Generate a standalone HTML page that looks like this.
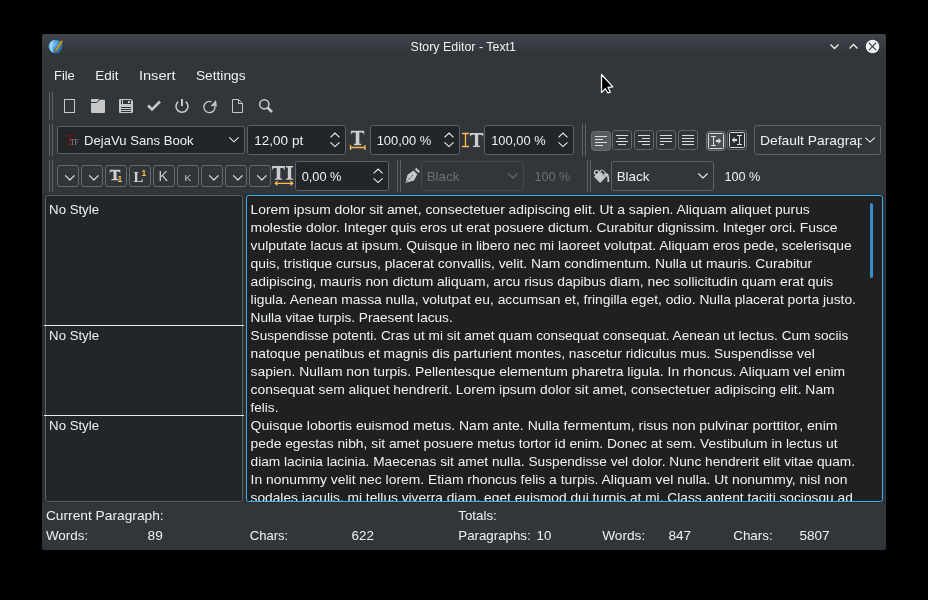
<!DOCTYPE html>
<html><head><meta charset="utf-8">
<style>
*{margin:0;padding:0}
html,body{width:928px;height:600px;background:#000;overflow:hidden}
svg{display:block;will-change:transform;font-family:"Liberation Sans",sans-serif}
</style></head><body>
<svg width="928" height="600" viewBox="0 0 928 600">
<defs><linearGradient id="tg" x1="0" y1="0" x2="0" y2="1"><stop offset="0" stop-color="#41464e"/><stop offset="1" stop-color="#31363b"/></linearGradient></defs>
<path d="M42,37 Q42,34 45,34 L883,34 Q886,34 886,37 L886,548 Q886,550 884,550 L44,550 Q42,550 42,548 Z" fill="#31363b" />
<path d="M42,37 Q42,34 45,34 L883,34 Q886,34 886,37 L886,52 L42,52 Z" fill="url(#tg)" />
<defs><radialGradient id="ball" cx="0.35" cy="0.3" r="0.8"><stop offset="0" stop-color="#79c2f0"/><stop offset="0.6" stop-color="#2f8bd0"/><stop offset="1" stop-color="#1a5f9e"/></radialGradient></defs>
<circle cx="55.4" cy="46.6" r="6.9" fill="url(#ball)"/>
<path d="M53.2,40.2 Q49.6,42.5 49.4,46.8 Q49.6,50.8 53.8,52.8 Q51.4,48 53.6,40.3 Z" fill="#b4dcf6" opacity="0.85"/>
<path d="M54.6,52.2 L55.3,49.6 L60.2,41.6 Q61.6,40 62.6,40.6 Q63,41.8 61.8,43.4 L57,50.4 Z" fill="#d4a03c" stroke="#6b4a12" stroke-width="0.5" />
<text x="410.60" y="51.10" textLength="105.40" lengthAdjust="spacingAndGlyphs" font-size="13" fill="#eff0f1" >Story Editor - Text1</text>
<path d="M830.5,44.5 L834.5,48.5 L838.5,44.5" fill="none" stroke="#eff0f1" stroke-width="1.3" />
<path d="M849.5,48.5 L853.5,44.5 L857.5,48.5" fill="none" stroke="#eff0f1" stroke-width="1.3" />
<circle cx="872.5" cy="46.5" r="6.8" fill="#eff0f1"/>
<path d="M868.9,42.9 L876.1,50.1 M876.1,42.9 L868.9,50.1" fill="none" stroke="#31363b" stroke-width="1.1" />
<text x="54.00" y="79.80" textLength="20.80" lengthAdjust="spacingAndGlyphs" font-size="13" fill="#eff0f1" >File</text>
<text x="95.20" y="79.80" textLength="23.20" lengthAdjust="spacingAndGlyphs" font-size="13" fill="#eff0f1" >Edit</text>
<text x="138.90" y="79.80" textLength="36.60" lengthAdjust="spacingAndGlyphs" font-size="13" fill="#eff0f1" >Insert</text>
<text x="195.90" y="79.80" textLength="49.70" lengthAdjust="spacingAndGlyphs" font-size="13" fill="#eff0f1" >Settings</text>
<rect x="49" y="92" width="1" height="28" fill="#5f6367"/><rect x="52" y="92" width="1" height="28" fill="#5f6367"/>
<rect x="64.5" y="99.5" width="10" height="13" rx="0" fill="none" stroke="#c6c7c8" stroke-width="1"/>
<path d="M91,100 Q91,99 92,99 L98,99 L98.8,99.8 L104,99.8 Q105,99.8 105,100.8 L105,112 Q105,113 104,113 L92,113 Q91,113 91,112 Z" fill="#c6c7c8" />
<path d="M91,102.5 L96.8,102.5 L99.3,100" fill="none" stroke="#31363b" stroke-width="1" />
<path d="M119,100 Q119,99 120,99 L131,99 L133,101 L133,112 Q133,113 132,113 L120,113 Q119,113 119,112 Z" fill="#c6c7c8" />
<rect x="121" y="100" width="1" height="4" rx="0" fill="#31363b"/>
<rect x="123" y="100" width="8" height="4" rx="0" fill="#31363b"/>
<rect x="128" y="101" width="2" height="2" rx="0" fill="#c6c7c8"/>
<rect x="121" y="107" width="10" height="1" rx="0" fill="#31363b"/>
<rect x="121" y="109" width="10" height="1" rx="0" fill="#31363b"/>
<rect x="121" y="111" width="10" height="1" rx="0" fill="#31363b"/>
<path d="M148,105.5 L152,109.5 L160,101.5" fill="none" stroke="#c6c7c8" stroke-width="2.6" />
<path d="M178.2,101.6 A6,6 0 1 0 185.8,101.6" fill="none" stroke="#c6c7c8" stroke-width="1.6" />
<rect x="181" y="99" width="2" height="7" rx="0" fill="#c6c7c8"/>
<path d="M215,106.5 A5.6,5.6 0 1 1 211.5,101.8" fill="none" stroke="#c6c7c8" stroke-width="1.4" />
<path d="M210.5,106 L217,106.5 L216,100 Z" fill="#bcc2c7" />
<path d="M232.5,99.5 L238.5,99.5 L242.5,103.5 L242.5,112.5 L232.5,112.5 Z" fill="none" stroke="#c6c7c8" stroke-width="1" />
<path d="M238.5,99.5 L238.5,103.5 L242.5,103.5" fill="none" stroke="#c6c7c8" stroke-width="1" />
<circle cx="264.3" cy="104.3" r="4.6" fill="none" stroke="#c6c7c8" stroke-width="1.6"/>
<path d="M267.5,107.5 L272,112" fill="none" stroke="#c6c7c8" stroke-width="2.6" />
<rect x="49" y="124" width="1" height="32" fill="#5f6367"/><rect x="52" y="124" width="1" height="32" fill="#5f6367"/>
<rect x="57.5" y="126.5" width="187" height="27" rx="2.2" fill="#232629" stroke="#5f6367" stroke-width="1"/>
<text x="65.5" y="144.7" font-family="Liberation Serif" font-size="15" fill="#8e0a0a">T</text>
<text x="70" y="144.7" font-family="Liberation Serif" font-size="7.5" fill="#8a8c8e">TF</text>
<text x="84.10" y="144.70" textLength="109.40" lengthAdjust="spacingAndGlyphs" font-size="13" fill="#eff0f1" >DejaVu Sans Book</text>
<path d="M229.3,137.3 L233.95000000000002,141.8 L238.60000000000002,137.3" fill="none" stroke="#eff0f1" stroke-width="1.05" />
<rect x="247.5" y="125.5" width="98" height="29" rx="2.2" fill="#232629" stroke="#5f6367" stroke-width="1"/>
<text x="254.30" y="145.20" textLength="48.90" lengthAdjust="spacingAndGlyphs" font-size="13" fill="#eff0f1" >12,00 pt</text>
<path d="M330.5,137.4 L335.0,133.1 L339.5,137.4" fill="none" stroke="#eff0f1" stroke-width="1.1" />
<path d="M330.5,142.3 L335.0,146.6 L339.5,142.3" fill="none" stroke="#eff0f1" stroke-width="1.1" />
<path d="M350.9,130.7 H364.2 V134.89999999999998 Q363.7,132.9 362.0,132.6 H359.34999999999997 V143.79999999999998 H361.15 V145.2 H353.94999999999993 V143.79999999999998 H355.74999999999994 V132.6 H353.09999999999997 Q351.4,132.9 350.9,134.89999999999998 Z" fill="#cdcdcd" />
<path d="M350.5,145 L350.5,150 M350.5,147.5 L365,147.5 M365,145 L365,150" fill="none" stroke="#fdbc4b" stroke-width="1.3" />
<rect x="370.5" y="125.5" width="89" height="29" rx="2.2" fill="#232629" stroke="#5f6367" stroke-width="1"/>
<text x="376.70" y="145.20" textLength="54.60" lengthAdjust="spacingAndGlyphs" font-size="13" fill="#eff0f1" >100,00 %</text>
<path d="M444.5,137.4 L449.0,133.1 L453.5,137.4" fill="none" stroke="#eff0f1" stroke-width="1.1" />
<path d="M444.5,142.3 L449.0,146.6 L453.5,142.3" fill="none" stroke="#eff0f1" stroke-width="1.1" />
<path d="M462,133.5 L469,133.5 M465.5,133.5 L465.5,146.5 M462,146.5 L469,146.5" fill="none" stroke="#fdbc4b" stroke-width="1.3" />
<path d="M469.9,133 H483.2 V136.9 Q482.7,135.10000000000002 481.0,134.8 H478.19999999999993 V145.7 H480.04999999999995 V147 H473.04999999999995 V145.7 H474.9 V134.8 H472.09999999999997 Q470.4,135.10000000000002 469.9,136.9 Z" fill="#cdcdcd" />
<rect x="484.5" y="125.5" width="89" height="29" rx="2.2" fill="#232629" stroke="#5f6367" stroke-width="1"/>
<text x="491.20" y="145.20" textLength="54.40" lengthAdjust="spacingAndGlyphs" font-size="13" fill="#eff0f1" >100,00 %</text>
<path d="M558.5,137.4 L563.0,133.1 L567.5,137.4" fill="none" stroke="#eff0f1" stroke-width="1.1" />
<path d="M558.5,142.3 L563.0,146.6 L567.5,142.3" fill="none" stroke="#eff0f1" stroke-width="1.1" />
<rect x="582" y="124" width="1" height="32" fill="#5f6367"/><rect x="585" y="124" width="1" height="32" fill="#5f6367"/>
<rect x="591.5" y="131.5" width="19" height="19" rx="3" fill="#575b60" stroke="#6a6e72" stroke-width="1"/>
<rect x="612.5" y="130.5" width="19" height="19" rx="2.5" fill="#31363b" stroke="#63676b" stroke-width="1"/>
<rect x="634.5" y="130.5" width="19" height="19" rx="2.5" fill="#31363b" stroke="#63676b" stroke-width="1"/>
<rect x="656.5" y="130.5" width="19" height="19" rx="2.5" fill="#31363b" stroke="#63676b" stroke-width="1"/>
<rect x="678.5" y="130.5" width="19" height="19" rx="2.5" fill="#31363b" stroke="#63676b" stroke-width="1"/>
<rect x="595" y="136" width="12" height="1" rx="0" fill="#dcdcdc"/>
<rect x="595" y="139" width="8" height="1" rx="0" fill="#dcdcdc"/>
<rect x="595" y="142" width="12" height="1" rx="0" fill="#dcdcdc"/>
<rect x="595" y="145" width="8" height="1" rx="0" fill="#dcdcdc"/>
<rect x="616" y="135" width="12" height="1" rx="0" fill="#dcdcdc"/>
<rect x="618" y="138" width="8" height="1" rx="0" fill="#dcdcdc"/>
<rect x="616" y="141" width="12" height="1" rx="0" fill="#dcdcdc"/>
<rect x="618" y="144" width="8" height="1" rx="0" fill="#dcdcdc"/>
<rect x="638" y="135" width="12" height="1" rx="0" fill="#dcdcdc"/>
<rect x="642" y="138" width="8" height="1" rx="0" fill="#dcdcdc"/>
<rect x="638" y="141" width="12" height="1" rx="0" fill="#dcdcdc"/>
<rect x="642" y="144" width="8" height="1" rx="0" fill="#dcdcdc"/>
<rect x="660" y="135" width="12" height="1" rx="0" fill="#dcdcdc"/>
<rect x="660" y="138" width="12" height="1" rx="0" fill="#dcdcdc"/>
<rect x="660" y="141" width="12" height="1" rx="0" fill="#dcdcdc"/>
<rect x="660" y="144" width="4" height="1" rx="0" fill="#dcdcdc"/>
<rect x="682" y="135" width="12" height="1" rx="0" fill="#dcdcdc"/>
<rect x="682" y="138" width="12" height="1" rx="0" fill="#dcdcdc"/>
<rect x="682" y="141" width="12" height="1" rx="0" fill="#dcdcdc"/>
<rect x="682" y="144" width="12" height="1" rx="0" fill="#dcdcdc"/>
<rect x="706.5" y="131.5" width="19" height="19" rx="3" fill="#4d5156" stroke="#6a6e72" stroke-width="1"/>
<rect x="708.5" y="133.5" width="15" height="15" rx="1" fill="none" stroke="#d4d4d4" stroke-width="1"/>
<path d="M711,136.5 L716,136.5 M713.5,136.5 L713.5,145.5 M711,145.5 L716,145.5" fill="none" stroke="#dcdcdc" stroke-width="1" />
<path d="M716,140 L718.5,140 L718.5,138 L721.2,141 L718.5,144 L718.5,142 L716,142 Z" fill="#dcdcdc" />
<rect x="727.5" y="130.5" width="19" height="19" rx="2.5" fill="#2b2f33" stroke="#63676b" stroke-width="1"/>
<rect x="729.5" y="132.5" width="15" height="15" rx="1" fill="#292c30" stroke="#d4d4d4" stroke-width="1"/>
<path d="M737,135.5 L742,135.5 M739.5,135.5 L739.5,144.5 M737,144.5 L742,144.5" fill="none" stroke="#dcdcdc" stroke-width="1" />
<path d="M737,139 L734.5,139 L734.5,137 L731.8,140 L734.5,143 L734.5,141 L737,141 Z" fill="#dcdcdc" />
<rect x="754.5" y="125.5" width="126" height="29" rx="2.2" fill="#31363b" stroke="#5f6367" stroke-width="1"/>
<clipPath id="pc"><rect x="755" y="126" width="107" height="28"/></clipPath>
<text x="760" y="144.9" textLength="147" lengthAdjust="spacingAndGlyphs" font-size="13" fill="#eff0f1" clip-path="url(#pc)">Default Paragraph Style</text>
<path d="M865.4,137.6 L870.05,142.1 L874.6999999999999,137.6" fill="none" stroke="#eff0f1" stroke-width="1.05" />
<rect x="49" y="160" width="1" height="32" fill="#5f6367"/><rect x="52" y="160" width="1" height="32" fill="#5f6367"/>
<rect x="57.5" y="165.5" width="21" height="21" rx="2.5" fill="#31363b" stroke="#65696d" stroke-width="1"/>
<rect x="81.5" y="165.5" width="21" height="21" rx="2.5" fill="#31363b" stroke="#65696d" stroke-width="1"/>
<rect x="105.5" y="165.5" width="21" height="21" rx="2.5" fill="#31363b" stroke="#65696d" stroke-width="1"/>
<rect x="129.5" y="165.5" width="21" height="21" rx="2.5" fill="#31363b" stroke="#65696d" stroke-width="1"/>
<rect x="153.5" y="165.5" width="21" height="21" rx="2.5" fill="#31363b" stroke="#65696d" stroke-width="1"/>
<rect x="177.5" y="165.5" width="21" height="21" rx="2.5" fill="#31363b" stroke="#65696d" stroke-width="1"/>
<rect x="201.5" y="165.5" width="21" height="21" rx="2.5" fill="#31363b" stroke="#65696d" stroke-width="1"/>
<rect x="225.5" y="165.5" width="21" height="21" rx="2.5" fill="#31363b" stroke="#65696d" stroke-width="1"/>
<rect x="249.5" y="165.5" width="21" height="21" rx="2.5" fill="#31363b" stroke="#65696d" stroke-width="1"/>
<path d="M65.2,175.4 L69.85000000000001,179.9 L74.5,175.4" fill="none" stroke="#eff0f1" stroke-width="1.05" />
<path d="M89.2,175.4 L93.85000000000001,179.9 L98.5,175.4" fill="none" stroke="#eff0f1" stroke-width="1.05" />
<path d="M209.2,175.4 L213.85,179.9 L218.5,175.4" fill="none" stroke="#eff0f1" stroke-width="1.05" />
<path d="M233.2,175.4 L237.85,179.9 L242.5,175.4" fill="none" stroke="#eff0f1" stroke-width="1.05" />
<path d="M257.2,175.4 L261.84999999999997,179.9 L266.5,175.4" fill="none" stroke="#eff0f1" stroke-width="1.05" />
<path d="M109.7,169.7 H120.3 V173.29999999999998 Q119.8,171.8 118.1,171.5 H116.55 V178.9 H118.6 V180.3 H111.4 V178.9 H113.45 V171.5 H111.9 Q110.2,171.8 109.7,173.29999999999998 Z" fill="#cdcdcd" />
<text x="117.5" y="182.2" font-family="Liberation Sans" font-weight="bold" font-size="8.5" fill="#fdbc4b">1</text>
<text x="133.5" y="182.2" font-family="Liberation Serif" font-weight="bold" font-size="14.5" fill="#d0d0d0" textLength="9.8" lengthAdjust="spacingAndGlyphs">L</text>
<text x="141.6" y="176" font-family="Liberation Sans" font-weight="bold" font-size="8.5" fill="#fdbc4b">1</text>
<text x="158.5" y="181.2" font-family="Liberation Sans" font-size="14.2" fill="#c8c8c8">K</text>
<text x="184.6" y="180.8" font-family="Liberation Sans" font-size="9.6" fill="#c8c8c8" textLength="6.6" lengthAdjust="spacingAndGlyphs">K</text>
<path d="M272.1,166 H284.9 V170.4 Q284.4,168.20000000000002 282.7,167.9 H280.3 V178.5 H282.1 V179.8 H274.9 V178.5 H276.7 V167.9 H274.3 Q272.6,168.20000000000002 272.1,170.4 Z" fill="#cdcdcd" />
<path d="M285.9,166 H293.1 V167.4 H291.15 V178.4 H293.1 V179.8 H285.9 V178.4 H287.85 V167.4 H285.9 Z" fill="#cdcdcd" />
<path d="M275.5,183.3 L292.5,183.3 M277.5,181.3 L275.3,183.3 L277.5,185.3 M290.5,181.3 L292.7,183.3 L290.5,185.3" fill="none" stroke="#fdbc4b" stroke-width="1.3" />
<rect x="295.5" y="161.5" width="93" height="29" rx="2.2" fill="#232629" stroke="#5f6367" stroke-width="1"/>
<text x="301.70" y="180.90" textLength="39.80" lengthAdjust="spacingAndGlyphs" font-size="13" fill="#eff0f1" >0,00 %</text>
<path d="M373.6,173.4 L378.1,169.1 L382.6,173.4" fill="none" stroke="#eff0f1" stroke-width="1.1" />
<path d="M373.6,178.3 L378.1,182.6 L382.6,178.3" fill="none" stroke="#eff0f1" stroke-width="1.1" />
<rect x="397" y="160" width="1" height="32" fill="#5f6367"/><rect x="400" y="160" width="1" height="32" fill="#5f6367"/>
<path d="M405.3,183 L407.5,174.8 L413.6,170.6 L417.3,174.3 L414,180.4 Z" fill="#c8c8c8" />
<path d="M414.8,169.3 L416.3,167.8 L420,171.5 L418.5,173 Z" fill="#c8c8c8" />
<path d="M406.2,182 L412.8,175.2" fill="none" stroke="#31363b" stroke-width="1.0" stroke-dasharray="1.3 0.8"/>
<rect x="421.5" y="161.5" width="102" height="29" rx="2.2" fill="#31363b" stroke="#43484d" stroke-width="1"/>
<text x="426.70" y="180.90" textLength="32.70" lengthAdjust="spacingAndGlyphs" font-size="13" fill="#6c7075" >Black</text>
<path d="M508.3,173.5 L512.95,178.0 L517.6,173.5" fill="none" stroke="#6c7075" stroke-width="1.05" />
<text x="534.40" y="180.90" textLength="36.00" lengthAdjust="spacingAndGlyphs" font-size="13" fill="#6c7075" >100 %</text>
<rect x="587" y="160" width="1" height="32" fill="#5f6367"/><rect x="590" y="160" width="1" height="32" fill="#5f6367"/>
<circle cx="596.6" cy="172.4" r="2.1" fill="none" stroke="#c8c8c8" stroke-width="1.3"/>
<path d="M593.9,176.7 L599.8,170.9 L606,177.1 L600.2,183 Z" fill="#c8c8c8" />
<ellipse cx="603.5" cy="173.3" rx="4.6" ry="2.3" transform="rotate(45 603.5 173.3)" fill="#c8c8c8"/>
<ellipse cx="602.9" cy="172.2" rx="2.4" ry="1.0" transform="rotate(45 602.9 172.2)" fill="#31363b"/>
<path d="M600.4,172 L605.7,177.1" fill="none" stroke="#31363b" stroke-width="0.8" stroke-dasharray="1 0.8"/>
<path d="M606.8,173.8 Q608.3,175.6 608.3,178 L608.3,182" fill="none" stroke="#c8c8c8" stroke-width="1.8" />
<rect x="611.5" y="161.5" width="102" height="29" rx="2.2" fill="#31363b" stroke="#5f6367" stroke-width="1"/>
<text x="616.70" y="180.90" textLength="32.70" lengthAdjust="spacingAndGlyphs" font-size="13" fill="#eff0f1" >Black</text>
<path d="M698.3,173.5 L702.9499999999999,178.0 L707.5999999999999,173.5" fill="none" stroke="#eff0f1" stroke-width="1.05" />
<text x="724.40" y="180.90" textLength="36.00" lengthAdjust="spacingAndGlyphs" font-size="13" fill="#eff0f1" >100 %</text>
<rect x="42" y="194" width="204" height="309" rx="0" fill="#2b2f33"/>
<rect x="245" y="194" width="640" height="309" rx="0" fill="#2b2f33"/>
<rect x="45.5" y="195.5" width="197" height="306" rx="2" fill="#232629" stroke="#5a5e62" stroke-width="1"/>
<rect x="44" y="325" width="200" height="1" rx="0" fill="#eaeaea"/>
<rect x="44" y="415" width="200" height="1" rx="0" fill="#eaeaea"/>
<text x="49.10" y="213.70" textLength="49.90" lengthAdjust="spacingAndGlyphs" font-size="13" fill="#eff0f1" >No Style</text>
<text x="49.10" y="339.70" textLength="49.90" lengthAdjust="spacingAndGlyphs" font-size="13" fill="#eff0f1" >No Style</text>
<text x="49.10" y="429.80" textLength="49.90" lengthAdjust="spacingAndGlyphs" font-size="13" fill="#eff0f1" >No Style</text>
<clipPath id="ed"><rect x="247" y="196" width="635" height="305"/></clipPath>
<rect x="246.5" y="195.5" width="636" height="306" rx="2" fill="#1e2022" stroke="#3daee9" stroke-width="1"/>
<g clip-path="url(#ed)">
<text x="250.60" y="214.10" textLength="559.20" lengthAdjust="spacingAndGlyphs" font-size="13" fill="#eff0f1" >Lorem ipsum dolor sit amet, consectetuer adipiscing elit. Ut a sapien. Aliquam aliquet purus</text>
<text x="250.60" y="232.10" textLength="586.90" lengthAdjust="spacingAndGlyphs" font-size="13" fill="#eff0f1" >molestie dolor. Integer quis eros ut erat posuere dictum. Curabitur dignissim. Integer orci. Fusce</text>
<text x="250.60" y="250.10" textLength="601.00" lengthAdjust="spacingAndGlyphs" font-size="13" fill="#eff0f1" >vulputate lacus at ipsum. Quisque in libero nec mi laoreet volutpat. Aliquam eros pede, scelerisque</text>
<text x="250.60" y="268.10" textLength="561.60" lengthAdjust="spacingAndGlyphs" font-size="13" fill="#eff0f1" >quis, tristique cursus, placerat convallis, velit. Nam condimentum. Nulla ut mauris. Curabitur</text>
<text x="250.60" y="286.10" textLength="582.60" lengthAdjust="spacingAndGlyphs" font-size="13" fill="#eff0f1" >adipiscing, mauris non dictum aliquam, arcu risus dapibus diam, nec sollicitudin quam erat quis</text>
<text x="250.60" y="304.10" textLength="605.30" lengthAdjust="spacingAndGlyphs" font-size="13" fill="#eff0f1" >ligula. Aenean massa nulla, volutpat eu, accumsan et, fringilla eget, odio. Nulla placerat porta justo.</text>
<text x="250.60" y="322.10" textLength="202.10" lengthAdjust="spacingAndGlyphs" font-size="13" fill="#eff0f1" >Nulla vitae turpis. Praesent lacus.</text>
<text x="250.60" y="340.10" textLength="597.70" lengthAdjust="spacingAndGlyphs" font-size="13" fill="#eff0f1" >Suspendisse potenti. Cras ut mi sit amet quam consequat consequat. Aenean ut lectus. Cum sociis</text>
<text x="250.60" y="358.10" textLength="564.20" lengthAdjust="spacingAndGlyphs" font-size="13" fill="#eff0f1" >natoque penatibus et magnis dis parturient montes, nascetur ridiculus mus. Suspendisse vel</text>
<text x="250.60" y="376.10" textLength="594.50" lengthAdjust="spacingAndGlyphs" font-size="13" fill="#eff0f1" >sapien. Nullam non turpis. Pellentesque elementum pharetra ligula. In rhoncus. Aliquam vel enim</text>
<text x="250.60" y="394.10" textLength="584.10" lengthAdjust="spacingAndGlyphs" font-size="13" fill="#eff0f1" >consequat sem aliquet hendrerit. Lorem ipsum dolor sit amet, consectetuer adipiscing elit. Nam</text>
<text x="250.60" y="412.10" textLength="27.80" lengthAdjust="spacingAndGlyphs" font-size="13" fill="#eff0f1" >felis.</text>
<text x="250.60" y="430.10" textLength="586.90" lengthAdjust="spacingAndGlyphs" font-size="13" fill="#eff0f1" >Quisque lobortis euismod metus. Nam ante. Nulla fermentum, risus non pulvinar porttitor, enim</text>
<text x="250.60" y="448.10" textLength="586.90" lengthAdjust="spacingAndGlyphs" font-size="13" fill="#eff0f1" >pede egestas nibh, sit amet posuere metus tortor id enim. Donec at sem. Vestibulum in lectus ut</text>
<text x="250.60" y="466.10" textLength="604.40" lengthAdjust="spacingAndGlyphs" font-size="13" fill="#eff0f1" >diam lacinia lacinia. Maecenas sit amet nulla. Suspendisse vel dolor. Nunc hendrerit elit vitae quam.</text>
<text x="250.60" y="484.10" textLength="596.80" lengthAdjust="spacingAndGlyphs" font-size="13" fill="#eff0f1" >In nonummy velit nec lorem. Etiam rhoncus felis a turpis. Aliquam vel nulla. Ut nonummy, nisl non</text>
<text x="250.60" y="502.10" textLength="602.20" lengthAdjust="spacingAndGlyphs" font-size="13" fill="#eff0f1" >sodales iaculis, mi tellus viverra diam, eget euismod dui turpis at mi. Class aptent taciti sociosqu ad</text>
</g>
<rect x="870" y="203" width="3" height="75" rx="1.5" fill="#3a8ec4"/>
<text x="45.90" y="519.80" textLength="117.80" lengthAdjust="spacingAndGlyphs" font-size="13" fill="#eff0f1" >Current Paragraph:</text>
<text x="45.90" y="539.90" textLength="42.30" lengthAdjust="spacingAndGlyphs" font-size="13" fill="#eff0f1" >Words:</text>
<text x="147.60" y="539.90" textLength="15.20" lengthAdjust="spacingAndGlyphs" font-size="13" fill="#eff0f1" >89</text>
<text x="249.70" y="539.90" textLength="38.50" lengthAdjust="spacingAndGlyphs" font-size="13" fill="#eff0f1" >Chars:</text>
<text x="351.60" y="539.90" textLength="22.30" lengthAdjust="spacingAndGlyphs" font-size="13" fill="#eff0f1" >622</text>
<text x="458.30" y="519.80" textLength="38.50" lengthAdjust="spacingAndGlyphs" font-size="13" fill="#eff0f1" >Totals:</text>
<text x="458.30" y="539.90" textLength="72.40" lengthAdjust="spacingAndGlyphs" font-size="13" fill="#eff0f1" >Paragraphs:</text>
<text x="536.60" y="539.90" textLength="14.80" lengthAdjust="spacingAndGlyphs" font-size="13" fill="#eff0f1" >10</text>
<text x="602.20" y="539.90" textLength="43.00" lengthAdjust="spacingAndGlyphs" font-size="13" fill="#eff0f1" >Words:</text>
<text x="668.40" y="539.90" textLength="22.70" lengthAdjust="spacingAndGlyphs" font-size="13" fill="#eff0f1" >847</text>
<text x="733.20" y="539.90" textLength="39.60" lengthAdjust="spacingAndGlyphs" font-size="13" fill="#eff0f1" >Chars:</text>
<text x="799.40" y="539.90" textLength="30.30" lengthAdjust="spacingAndGlyphs" font-size="13" fill="#eff0f1" >5807</text>
<path d="M601.5,74.5 L601.5,92.5 L605.3,88.7 L608,93 L610.4,92 L607.9,87.3 L612.9,86.8 Z" fill="#000" stroke="#fff" stroke-width="1.2" stroke-linejoin="round"/>
</svg>
</body></html>
